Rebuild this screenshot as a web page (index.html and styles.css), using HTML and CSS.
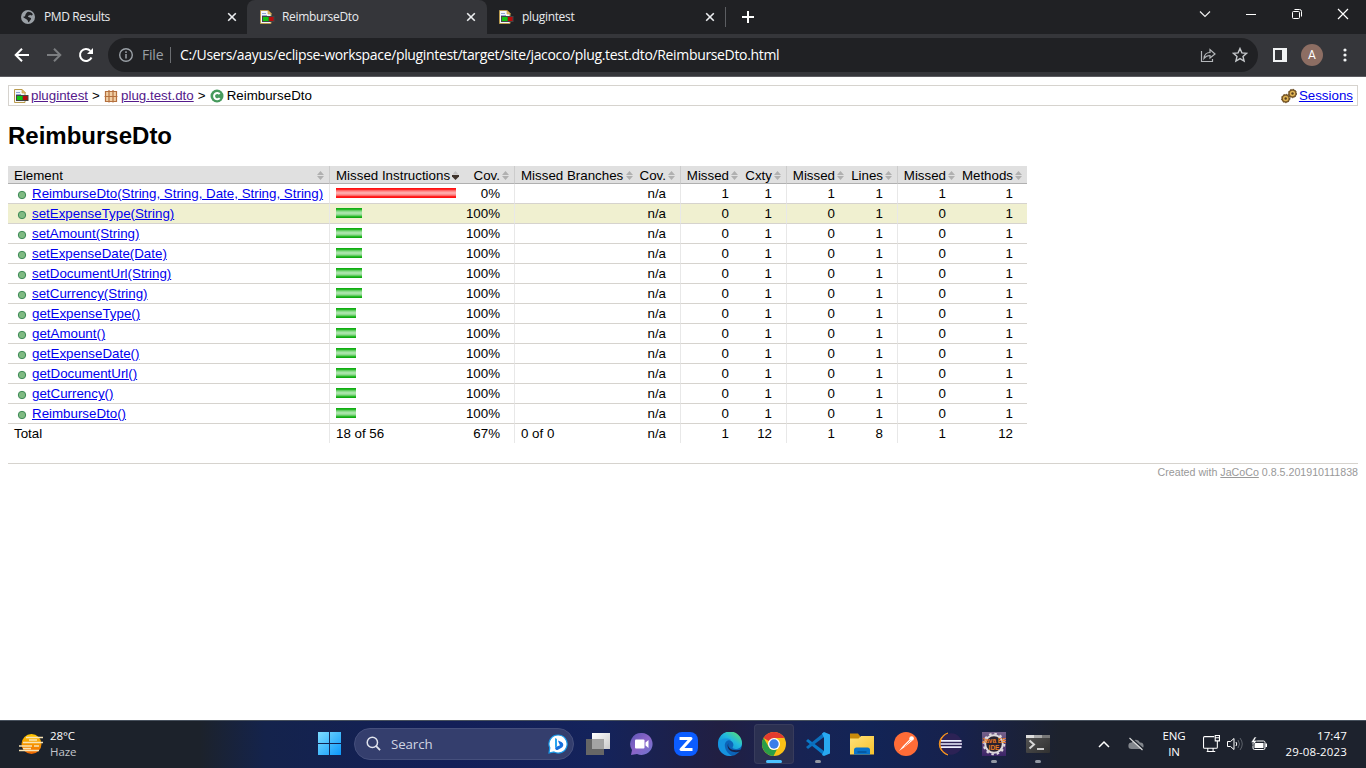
FILE: index.html
```html
<!DOCTYPE html>
<html lang="en">
<head>
<meta charset="utf-8">
<title>ReimburseDto</title>
<link rel="stylesheet" href="styles.css">
</head>
<body>
<svg class="defs" aria-hidden="true">
  <defs>
    <linearGradient id="gwin" x1="0" y1="0" x2="1" y2="1"><stop offset="0" stop-color="#7ddcff"/><stop offset="1" stop-color="#0c98fb"/></linearGradient>
    <linearGradient id="gsun" x1="0" y1="0" x2="0" y2="1"><stop offset="0" stop-color="#ffc900"/><stop offset="1" stop-color="#ee6500"/></linearGradient>
    <linearGradient id="gchat" x1="0" y1="0" x2="1" y2="1"><stop offset="0" stop-color="#5a55b5"/><stop offset=".5" stop-color="#8b64c8"/><stop offset="1" stop-color="#6b76d0"/></linearGradient>
    <linearGradient id="gedge" x1="0" y1="1" x2="1" y2="0"><stop offset="0" stop-color="#087bd5"/><stop offset=".55" stop-color="#22b9df"/><stop offset="1" stop-color="#66e85a"/></linearGradient>
    <linearGradient id="gfold" x1="0" y1="0" x2="1" y2="1"><stop offset="0" stop-color="#ffe27a"/><stop offset="1" stop-color="#f7c22c"/></linearGradient>
    <linearGradient id="gview" x1="0" y1="0" x2="1" y2="1"><stop offset="0" stop-color="#fff"/><stop offset="1" stop-color="#c9c9c9"/></linearGradient>
    <linearGradient id="gterm" x1="0" y1="0" x2="1" y2="1"><stop offset="0" stop-color="#555"/><stop offset="1" stop-color="#303030"/></linearGradient>
    <linearGradient id="gee" x1="0" y1="0" x2="0" y2="1"><stop offset="0" stop-color="#75618a"/><stop offset="1" stop-color="#3c2467"/></linearGradient>
  </defs>
  <symbol id="report" viewBox="0 0 16 16">
    <path d="M1.500 1.500h7.500l3 3v10H1.500z" fill="#f4f6fb" stroke="#b99a4c"/>
    <path d="M9 1.500V5h3.500z" fill="#e4c070" stroke="#c79a3c" stroke-width=".6"/>
    <path d="M3 4.500h4M3 6.500h5" stroke="#8ea5d2"/>
    <path d="M3 7h12.500v6H3z" fill="#444"/>
    <path d="M4 8h5.500v4H4z" fill="#12c312"/><path d="M10 8h4.500v4H10z" fill="#b90b0b"/>
  </symbol>
  <symbol id="close" viewBox="0 0 10 10"><path d="M1.200 1.200l7.600 7.600M8.800 1.200L1.200 8.800" stroke="#eceef0" stroke-width="1.600"/></symbol>
  <symbol id="sort" viewBox="0 0 7 9"><path d="M3.500 0L7 4H0zM0 5h7L3.500 9z" fill="#b0b0b0"/></symbol>
  <symbol id="dot" viewBox="0 0 10 10"><circle cx="5" cy="5" r="3.700" fill="#7fba82" stroke="#3f8a58"/></symbol>
</svg>

<div class="tabs">
  <div class="tab first">
    <svg class="fav" viewBox="0 0 16 16"><circle cx="8" cy="8" r="7" fill="#9aa0a6"/><path d="M7.500 3c2-.5 4.500.5 5.300 2.500-.8 1.300-2 1-2.600.2-.6 1.200-1.800.6-2.200 1.600-.3 1 1.800.8 2.800 1.600 1 1-.8 2-1.800 4.300-1.200.2-.8-1.500-1.600-2.300C6.400 9.700 4 9.500 2.800 7.500c.9.300 2 .3 2.300-.5C5.400 6 5.800 4 7.500 3z" fill="#202124"/></svg>
    <span class="tabname">PMD Results</span><svg class="x"><use href="#close"/></svg>
  </div>
  <div class="tab active">
    <svg class="fav"><use href="#report"/></svg>
    <span class="tabname">ReimburseDto</span><svg class="x"><use href="#close"/></svg>
  </div>
  <div class="tab third">
    <svg class="fav"><use href="#report"/></svg>
    <span class="tabname">plugintest</span><svg class="x"><use href="#close"/></svg>
  </div>
  <i class="tabsep"></i>
  <svg class="newtab" viewBox="0 0 12 12"><path d="M6 0v12M0 6h12" stroke="#fff" stroke-width="2"/></svg>
  <div class="winctl">
    <svg viewBox="0 0 12 12"><path d="M1 3.500l5 5 5-5" fill="none" stroke="#eee" stroke-width="1.200"/></svg>
    <svg viewBox="0 0 12 12"><path d="M1 6.500h10" stroke="#fff"/></svg>
    <svg viewBox="0 0 12 12" fill="none" stroke="#fff"><rect x="1.500" y="3.500" width="7" height="7" rx="1"/><path d="M3.500 1.500h5q2 0 2 2v5"/></svg>
    <svg viewBox="0 0 12 12"><path d="M1 1l10 10M11 1L1 11" stroke="#fff" stroke-width="1.200"/></svg>
  </div>
</div>

<div class="toolbar">
  <svg class="nav" viewBox="0 0 16 16"><path d="M15 8H2M8 1.700L1.700 8 8 14.300" fill="none" stroke="#fff" stroke-width="2"/></svg>
  <svg class="nav" viewBox="0 0 16 16"><path d="M1 8h13M8 1.700L14.300 8 8 14.300" fill="none" stroke="#7c7e81" stroke-width="2"/></svg>
  <svg class="nav" viewBox="0 0 16 16"><path d="M13.500 10.500A6 6 0 1 1 12.400 3.900" fill="none" stroke="#fff" stroke-width="2"/><path d="M15 1v6H9z" fill="#fff"/></svg>
  <div class="omnibox">
    <svg class="info" viewBox="0 0 16 16"><circle cx="8" cy="8" r="6.300" fill="none" stroke="#9aa0a6" stroke-width="1.400"/><path d="M8 7v4.500M8 4.300v1.600" stroke="#9aa0a6" stroke-width="1.500"/></svg>
    <span class="scheme">File</span>
    <span class="url">C:/Users/aayus/eclipse-workspace/plugintest/target/site/jacoco/plug.test.dto/ReimburseDto.html</span>
    <svg class="obi" viewBox="0 0 16 16" fill="none" stroke="#b4b7ba" stroke-width="1.200"><path d="M1.500 4v10.500h11V12M4 11.500c.3-4 2.500-6 6-6V2.500L15 7l-5 4V8.500c-2.500 0-4.500 1-6 3z"/></svg>
    <svg class="obi star" viewBox="0 0 16 16"><path d="M8 1.500l1.900 4.400 4.700.4-3.600 3.100 1.100 4.700L8 11.600l-4.100 2.500L5 9.400 1.400 6.300l4.700-.4z" fill="none" stroke="#c5c8cb" stroke-width="1.400"/></svg>
  </div>
  <svg class="side" viewBox="0 0 14 14"><path d="M0 0h14v14H0zM2 2v10h7V2z" fill="#f1f3f4" fill-rule="evenodd"/></svg>
  <span class="avatar">A</span>
  <svg class="more" viewBox="0 0 4 14"><g fill="#f1f3f4"><circle cx="2" cy="2" r="1.600"/><circle cx="2" cy="7" r="1.600"/><circle cx="2" cy="12" r="1.600"/></g></svg>
</div>

<main class="page">
  <div class="breadcrumb">
    <svg class="bi"><use href="#report"/></svg><a class="visited" href="#">plugintest</a><span class="gt">&gt;</span>
    <svg class="bi" viewBox="0 0 16 16"><rect x="3" y="3" width="10" height="10" fill="#f1cfa4"/><path d="M2.500 3.500h11v10h-11zM6 2v12.500M10 2v12.500M1.500 8.500h13" fill="none" stroke="#b5703e" stroke-width="1.200"/></svg><a class="visited" href="#">plug.test.dto</a><span class="gt">&gt;</span>
    <svg class="bi" viewBox="0 0 16 16"><circle cx="8" cy="8" r="6.500" fill="#479a5c"/><path d="M10.700 6A3.200 3.200 0 1 0 10.700 10.200" fill="none" stroke="#fff" stroke-width="2"/></svg><span>ReimburseDto</span>
    <svg class="bi sess" viewBox="0 0 16 16"><g fill="#e0b455" stroke="#7d5a26"><circle cx="4.700" cy="10.500" r="3.500" stroke-width="1.500"/><circle cx="11.500" cy="5.500" r="3.500" stroke-width="1.500"/></g><g fill="none" stroke="#5c421f" stroke-dasharray="1.300 1.500"><circle cx="4.700" cy="10.500" r="4.200"/><circle cx="11.500" cy="5.500" r="4.200"/></g><circle cx="4.700" cy="10.500" r="1.200" fill="#5c421f"/><circle cx="11.500" cy="5.500" r="1.200" fill="#5c421f"/></svg><a href="#">Sessions</a>
  </div>
  <h1>ReimburseDto</h1>
  <table class="coverage">
    <colgroup><col class="w321"><col class="w135"><col class="w50"><col class="w124"><col class="w42"><col class="w63"><col class="w43"><col class="w63"><col class="w48"><col class="w63"><col class="w67"></colgroup>
    <thead><tr>
      <td>Element<svg class="so"><use href="#sort"/></svg></td>
      <td class="b">Missed Instructions<svg class="so" viewBox="0 0 7 9"><path d="M3.500 0l3 3.500h-6z" fill="#c4c4c4"/><path d="M0 4h7v1.500L3.500 9 0 5.500z" fill="#40352c"/></svg></td>
      <td class="r">Cov.<svg class="so"><use href="#sort"/></svg></td>
      <td class="b">Missed Branches<svg class="so"><use href="#sort"/></svg></td>
      <td class="r">Cov.<svg class="so"><use href="#sort"/></svg></td>
      <td class="b r">Missed<svg class="so"><use href="#sort"/></svg></td>
      <td class="r">Cxty<svg class="so"><use href="#sort"/></svg></td>
      <td class="b r">Missed<svg class="so"><use href="#sort"/></svg></td>
      <td class="r">Lines<svg class="so"><use href="#sort"/></svg></td>
      <td class="b r">Missed<svg class="so"><use href="#sort"/></svg></td>
      <td class="r">Methods<svg class="so"><use href="#sort"/></svg></td>
    </tr></thead>
    <tbody>
      <tr><td class="el"><svg class="dot"><use href="#dot"/></svg><a href="#">ReimburseDto(String, String, Date, String, String)</a></td><td class="b"><i class="bar red" style="width:120px"></i></td><td class="r">0%</td><td class="b"></td><td class="r">n/a</td><td class="b r">1</td><td class="r">1</td><td class="b r">1</td><td class="r">1</td><td class="b r">1</td><td class="r">1</td></tr>
      <tr class="hover"><td class="el"><svg class="dot"><use href="#dot"/></svg><a href="#">setExpenseType(String)</a></td><td class="b"><i class="bar" style="width:26px"></i></td><td class="r">100%</td><td class="b"></td><td class="r">n/a</td><td class="b r">0</td><td class="r">1</td><td class="b r">0</td><td class="r">1</td><td class="b r">0</td><td class="r">1</td></tr>
      <tr><td class="el"><svg class="dot"><use href="#dot"/></svg><a href="#">setAmount(String)</a></td><td class="b"><i class="bar" style="width:26px"></i></td><td class="r">100%</td><td class="b"></td><td class="r">n/a</td><td class="b r">0</td><td class="r">1</td><td class="b r">0</td><td class="r">1</td><td class="b r">0</td><td class="r">1</td></tr>
      <tr><td class="el"><svg class="dot"><use href="#dot"/></svg><a href="#">setExpenseDate(Date)</a></td><td class="b"><i class="bar" style="width:26px"></i></td><td class="r">100%</td><td class="b"></td><td class="r">n/a</td><td class="b r">0</td><td class="r">1</td><td class="b r">0</td><td class="r">1</td><td class="b r">0</td><td class="r">1</td></tr>
      <tr><td class="el"><svg class="dot"><use href="#dot"/></svg><a href="#">setDocumentUrl(String)</a></td><td class="b"><i class="bar" style="width:26px"></i></td><td class="r">100%</td><td class="b"></td><td class="r">n/a</td><td class="b r">0</td><td class="r">1</td><td class="b r">0</td><td class="r">1</td><td class="b r">0</td><td class="r">1</td></tr>
      <tr><td class="el"><svg class="dot"><use href="#dot"/></svg><a href="#">setCurrency(String)</a></td><td class="b"><i class="bar" style="width:26px"></i></td><td class="r">100%</td><td class="b"></td><td class="r">n/a</td><td class="b r">0</td><td class="r">1</td><td class="b r">0</td><td class="r">1</td><td class="b r">0</td><td class="r">1</td></tr>
      <tr><td class="el"><svg class="dot"><use href="#dot"/></svg><a href="#">getExpenseType()</a></td><td class="b"><i class="bar" style="width:20px"></i></td><td class="r">100%</td><td class="b"></td><td class="r">n/a</td><td class="b r">0</td><td class="r">1</td><td class="b r">0</td><td class="r">1</td><td class="b r">0</td><td class="r">1</td></tr>
      <tr><td class="el"><svg class="dot"><use href="#dot"/></svg><a href="#">getAmount()</a></td><td class="b"><i class="bar" style="width:20px"></i></td><td class="r">100%</td><td class="b"></td><td class="r">n/a</td><td class="b r">0</td><td class="r">1</td><td class="b r">0</td><td class="r">1</td><td class="b r">0</td><td class="r">1</td></tr>
      <tr><td class="el"><svg class="dot"><use href="#dot"/></svg><a href="#">getExpenseDate()</a></td><td class="b"><i class="bar" style="width:20px"></i></td><td class="r">100%</td><td class="b"></td><td class="r">n/a</td><td class="b r">0</td><td class="r">1</td><td class="b r">0</td><td class="r">1</td><td class="b r">0</td><td class="r">1</td></tr>
      <tr><td class="el"><svg class="dot"><use href="#dot"/></svg><a href="#">getDocumentUrl()</a></td><td class="b"><i class="bar" style="width:20px"></i></td><td class="r">100%</td><td class="b"></td><td class="r">n/a</td><td class="b r">0</td><td class="r">1</td><td class="b r">0</td><td class="r">1</td><td class="b r">0</td><td class="r">1</td></tr>
      <tr><td class="el"><svg class="dot"><use href="#dot"/></svg><a href="#">getCurrency()</a></td><td class="b"><i class="bar" style="width:20px"></i></td><td class="r">100%</td><td class="b"></td><td class="r">n/a</td><td class="b r">0</td><td class="r">1</td><td class="b r">0</td><td class="r">1</td><td class="b r">0</td><td class="r">1</td></tr>
      <tr><td class="el"><svg class="dot"><use href="#dot"/></svg><a href="#">ReimburseDto()</a></td><td class="b"><i class="bar" style="width:20px"></i></td><td class="r">100%</td><td class="b"></td><td class="r">n/a</td><td class="b r">0</td><td class="r">1</td><td class="b r">0</td><td class="r">1</td><td class="b r">0</td><td class="r">1</td></tr>
    </tbody>
    <tfoot><tr><td>Total</td><td class="b">18 of 56</td><td class="r">67%</td><td class="b">0 of 0</td><td class="r">n/a</td><td class="b r">1</td><td class="r">12</td><td class="b r">1</td><td class="r">8</td><td class="b r">1</td><td class="r">12</td></tr></tfoot>
  </table>
  <footer><span>Created with <a href="#">JaCoCo</a> 0.8.5.201910111838</span></footer>
</main>

<div class="taskbar">
  <svg class="haze" viewBox="0 0 24 24"><circle cx="12.500" cy="12" r="10" fill="url(#gsun)"/><path d="M7 5.500h17M4 10.500h20M10 8h8M0 14h13M15 14h5M4 16.500h8M0 18.500h20" stroke="#f8e3b4" stroke-width="1.700"/></svg>
  <div class="weather"><span>28°C</span><span class="dim">Haze</span></div>
  <svg class="start" viewBox="0 0 24 24"><path d="M0 0h11.500v11.500H0zM12.500 0H24v11.500H12.500zM0 12.500h11.500V24H0zM12.500 12.500H24V24H12.500z" fill="url(#gwin)"/></svg>
  <div class="search">
    <svg class="mag" viewBox="0 0 16 16"><circle cx="6.800" cy="6.800" r="5.500" fill="none" stroke="#e1e4ee" stroke-width="1.600"/><path d="M10.600 10.600l4.400 4.400" stroke="#e1e4ee" stroke-width="1.900"/></svg>
    <span>Search</span>
    <svg class="bing" viewBox="0 0 20 20"><path d="M10 1a9 9 0 1 1-4 17l-5 1 .8-5.200A9 9 0 0 1 10 1z" fill="#fff" stroke="#1697e8" stroke-width="1.200"/><path d="M7 4l2 1v7.500L7 14z" fill="#28a4ef"/><path d="M7 14l2-1.500 3-1.200-1.200-2.600-.8-2.200 3.500 1.500c2.500 1.500 2.300 4.500 0 5.800L10 15.800q-1.300.6-2.300-.4z" fill="#176fdd"/></svg>
  </div>
  <div class="apps">
    <div class="app"><svg viewBox="0 0 24 24"><path d="M6 1h18v16H6z" fill="url(#gview)"/><path d="M0 7h18v16H0z" fill="#666"/><path d="M6 7h12v10H6z" fill="#a3a3a3"/></svg></div>
    <div class="app"><svg viewBox="0 0 24 24"><path d="M12 1a11 11 0 1 1-5 21l-6 1 1-5A11 11 0 0 1 12 1z" fill="url(#gchat)"/><rect x="5" y="7.500" width="9.500" height="9" rx="1" fill="#fff"/><path d="M15.500 10.500l3-2.500v8l-3-2.500z" fill="#fff"/></svg></div>
    <div class="app"><svg viewBox="0 0 24 24"><rect width="24" height="24" rx="8" fill="#0b5cff"/><path d="M5.500 6.500h11.500L7 17.500h11.500" fill="none" stroke="#fff" stroke-width="3" stroke-linejoin="round"/></svg></div>
    <div class="app"><svg viewBox="0 0 24 24"><circle cx="12" cy="12" r="12" fill="#0c64b8"/><path d="M0 12A12 12 0 0 1 24 11c.2 4-3 6-6.500 6-2.700 0-3.500-1-2.500-2.500C17 10 11 6 5.500 8.500 2 10 .5 12 0 12z" fill="url(#gedge)"/><path d="M0 12c1-5 9-7 13-4-4-.5-7 2.500-6 7 .7 4 4 7.500 7 8.700C6 25 0 19 0 12z" fill="#1694df"/><path d="M10.500 11c-2 5 4 9 13 6.500l-1.500 2c-3 .8-5 .8-7 .3-5-1.300-6.500-6-4.500-8.800z" fill="#17224b"/></svg></div>
    <div class="app current"><svg viewBox="0 0 24 24"><circle cx="12" cy="12" r="12" fill="#fbc116"/><path d="M12 12L1.600 6A12 12 0 0 1 22.400 6H12z" fill="#e33b2e"/><path d="M6.800 15A6 6 0 0 0 12 18l3-.8L11.500 24A12 12 0 0 1 1.600 6z" fill="#2a9e47"/><circle cx="12" cy="12" r="6" fill="#fff"/><circle cx="12" cy="12" r="4.700" fill="#397eea"/></svg><i class="mark wide"></i></div>
    <div class="app"><svg viewBox="0 0 24 24"><path d="M0 9l2-2 16 12v4.500z" fill="#0879ca"/><path d="M0 15l2 2L18 5V.5z" fill="#0b6fbd"/><path d="M18 0l6 2.500v19L18 24l-2-1 2-4.500V6l-2-4.500z" fill="#28a9f1"/></svg><i class="mark"></i></div>
    <div class="app"><svg viewBox="0 0 24 24"><path d="M0 1.500h8l2 2.500v4H0z" fill="#c88a0b"/><path d="M0 6.500h8.500L11 4h13v18.500H0z" fill="url(#gfold)"/><path d="M4 22.500V18q0-2.500 2.500-2.500h11Q20 15.500 20 18v4.500z" fill="#0873ca"/><path d="M7.500 20h9" stroke="#034a8d" stroke-width="1.200"/></svg></div>
    <div class="app"><svg viewBox="0 0 24 24"><circle cx="12" cy="12" r="12" fill="#ff6c37"/><path d="M5 19l4-5 7-7 2 2-8 6.500z" fill="#fff"/><circle cx="17.600" cy="6.500" r="2.300" fill="#fff"/><path d="M10.500 14.500l6-6" stroke="#ff6c37" stroke-width=".7"/></svg></div>
    <div class="app"><svg viewBox="0 0 24 24"><path d="M10 1A11.300 11.300 0 0 0 10 23 13 13 0 0 1 10 1z" fill="#f7941e" stroke="#f7941e"/><circle cx="13.300" cy="12" r="10.700" fill="#2c2255"/><path d="M3 8.800h20.500M2.600 12h21.400M3 15.200h20.500" stroke="#edf0ff" stroke-width="1.700"/></svg></div>
    <div class="app"><svg viewBox="0 0 24 24"><path d="M0 0h24v24H0z" fill="url(#gee)"/><circle cx="12" cy="12" r="8.800" fill="#2a2230" stroke="#ddd8dc" stroke-width="2"/><circle cx="12" cy="12" r="10.300" fill="none" stroke="#ddd8dc" stroke-width="2" stroke-dasharray="2.500 2.900"/><text class="ee" x="12" y="10.500" text-anchor="middle">Java EE</text><text class="ee" x="12" y="17.500" text-anchor="middle">IDE</text></svg><i class="mark"></i></div>
    <div class="app"><svg viewBox="0 0 24 24"><rect y="3" width="24" height="18" rx="1" fill="url(#gterm)"/><path d="M0 3h8v3H0z" fill="#ddd"/><path d="M8 3h8v3H8z" fill="#aaa"/><path d="M16 3h8v3h-8z" fill="#777"/><path d="M3.500 8.500l4.500 4-4.500 4" fill="none" stroke="#d8d8d8" stroke-width="2"/><path d="M11 17h7" stroke="#fff" stroke-width="1.500"/></svg><i class="mark"></i></div>
  </div>
  <svg class="chev" viewBox="0 0 12 8"><path d="M1 7l5-5 5 5" fill="none" stroke="#fff" stroke-width="1.500"/></svg>
  <svg class="cloud" viewBox="0 0 16 14"><path d="M3.500 12a3.200 3.200 0 0 1 .2-6.400A4.500 4.500 0 0 1 12 5.400a3.300 3.300 0 0 1 .5 6.600z" fill="#82868c"/><path d="M2.500 .5l13 11.500" stroke="#1d232d" stroke-width="1.500"/><path d="M1.500 1l13 12" stroke="#ddd" stroke-width="1.100"/></svg>
  <div class="lang"><span>ENG</span><span>IN</span></div>
  <svg class="net" viewBox="0 0 16 16" fill="none" stroke="#fff"><path d="M10.500 1.500H1.500q-1 0-1 1v9q0 1 1 1h11q1 0 1-1V8M4.500 12.500v3m5-3v3M3.500 15.500h8M11.500.500h4v5h-4zM13.500 5.500V8M11.500 2.500h4"/></svg>
  <svg class="vol" viewBox="0 0 16 14" fill="none" stroke="#fff"><path d="M.500 4.500h3L7 1.500v11L3.500 9.500h-3z"/><path d="M9 5q1.500 2 0 4"/><path d="M11 3q3 4 0 8M13 1q4.500 6 0 12" stroke="#5d626b"/></svg>
  <svg class="bat" viewBox="0 0 16 14"><rect x="2" y="4" width="12" height="8.500" rx="1.500" fill="none" stroke="#fff"/><path d="M3.500 6h9v5h-9zM14.500 6.500H16V10h-1.500z" fill="#fff"/><path d="M3.500 0L0 5.500h2.500L1.500 9 6 3.500H3.500L5.500 0z" fill="#fff" stroke="#1d232d" stroke-width=".5"/></svg>
  <div class="clock"><span>17:47</span><span>29-08-2023</span></div>
</div>
</body>
</html>
```
FILE: styles.css
```css
* { box-sizing: border-box; }
body { margin: 0; width: 1366px; height: 768px; overflow: hidden; display: flex; flex-direction: column; background: #fff; font-family: "Liberation Sans", Arial, sans-serif; font-size: 13.333px; color: #000; }
svg { display: block; flex: none; }
.defs { position: absolute; width: 0; height: 0; }

.tabs { height: 34px; background: #202124; display: flex; align-items: center; font-family: "Open Sans", sans-serif; font-size: 12px; color: #e8eaed; flex: none; }
.tab { height: 34px; display: flex; align-items: center; padding: 0 11px 0 12px; width: 240px; flex: none; }
.first { width: 247px; padding-left: 20px; padding-right: 10px; }
.third { width: 238px; padding: 0 10px 0 11px; }
.active { background: #35363a; border-radius: 8px 8px 0 0; }
.fav { width: 16px; height: 16px; margin-right: 8px; }
.active .fav { margin-right: 7px; }
.tabname { flex: 1; letter-spacing: -.33px; padding-bottom: 1px; }
.first .tabname { letter-spacing: -.38px; }
.x { width: 10px; height: 10px; }
.tabsep { width: 1px; height: 20px; background: #5c5e62; }
.newtab { width: 12px; height: 12px; margin-left: 16px; }
.winctl { margin-left: auto; display: flex; gap: 34px; padding-right: 17px; margin-top: -6px; }
.winctl svg { width: 12px; height: 12px; }

.toolbar { height: 43px; flex: none; background: #35363a; border-bottom: 1px solid #5b5b60; display: flex; align-items: center; padding: 0 19px 0 14px; font-family: "Open Sans", sans-serif; }
.nav { width: 16px; height: 16px; margin-right: 16px; }
.omnibox { width: 1150px; height: 34px; border-radius: 17px; background: #202124; display: flex; align-items: center; padding: 0 10px; margin-left: -2px; }
.info { width: 16px; height: 16px; margin-right: 8px; }
.scheme { color: #9aa0a6; font-size: 14px; width: 29px; border-right: 1px solid #6b6e72; line-height: 16px; padding-right: 7px; margin-right: 9px; letter-spacing: -.2px; }
.url { color: #fff; font-size: 14px; letter-spacing: -.34px; white-space: nowrap; flex: 1; padding-bottom: 1px; }
.obi { width: 16px; height: 16px; }
.star { margin-left: 16px; }
.side { width: 14px; height: 14px; margin-left: 15px; }
.avatar { width: 22px; height: 22px; border-radius: 11px; background: #8d6e63; color: #fff; font: 12px/22px Roboto, sans-serif; text-align: center; margin-left: 14px; }
.more { width: 4px; height: 14px; margin-left: auto; }

.page { flex: 1; padding: 8px 8px 0; }
a { color: #00e; text-decoration: underline; }
.visited { color: #551a8b; }
.breadcrumb { height: 21px; border: 1px solid #d6d3ce; display: flex; align-items: center; padding: 0 4px; white-space: nowrap; }
.bi { width: 16px; height: 16px; margin-right: 2px; }
.gt { width: 8px; margin: 0 3px 0 4px; }
.sess { margin-left: auto; }
h1 { font-size: 24px; line-height: 28px; margin: 16px 0 16px; }
.coverage { border-collapse: separate; border-spacing: 0; table-layout: fixed; width: 1019px; line-height: 15px; }
.w321 { width: 321px; } .w135 { width: 135px; } .w50 { width: 50px; } .w124 { width: 124px; } .w42 { width: 42px; }
.w63 { width: 63px; } .w43 { width: 43px; } .w48 { width: 48px; } .w67 { width: 67px; }
td { padding: 2px 0 0 6px; white-space: nowrap; vertical-align: top; overflow: visible; }
td.r { padding: 2px 14px 0 0; text-align: right; }
td.b { border-left: 1px solid #e8e8e8; }
thead td { background: #e0e0e0; border-bottom: 1px solid #b0b0b0; height: 18px; position: relative; }
thead td.b { border-left-color: #ccc; }
.so { position: absolute; right: 5px; top: 5px; width: 7px; height: 9px; }
tbody td { height: 20px; border-bottom: 1px solid #d6d3ce; }
tfoot td { height: 19px; }
.hover { background: #f0f0d0; }
.el a { margin-left: 1px; }
.dot { width: 10px; height: 10px; display: inline-block; margin: 0 4px -2px 3px; vertical-align: baseline; }
.bar { display: block; height: 10px; margin-top: 2px; background: linear-gradient(#12ae12 0 1px, #27b827 1px 2px, #63cc63 2px 3px, #8cdb8c 3px 4px, #a8e4a8 4px 6px, #90dc90 6px 7px, #64cd64 7px 8px, #28b928 8px 9px, #10a810 9px); }
.red { background: linear-gradient(#f11 0 1px, #ff2626 1px 2px, #f66 2px 3px, #ff8c8c 3px 4px, #ffa8a8 4px 6px, #ff8c8c 6px 7px, #f66 7px 8px, #ff2020 8px 9px, #f11 9px); }
footer { margin-top: 20px; border-top: 1px solid #d6d3ce; color: #999; font-size: 10.667px; line-height: 13px; padding-top: 2px; text-align: right; }
footer a { color: #999; }

.taskbar { height: 48px; flex: none; border-top: 1px solid #47515d; display: flex; align-items: center; padding: 0 19px 2px; color: #fff; font-family: "Open Sans", sans-serif; font-size: 11.500px; line-height: 16px; background: linear-gradient(90deg, #1c222b 0 200px, #14234c 265px, #131f58 450px, #14235b 600px, #211f42 720px, #182353 800px, #122456 870px, #17214c 960px, #1d222d 1060px); }
.haze { width: 24px; height: 24px; margin-right: 7px; }
.weather { display: flex; flex-direction: column; width: 268px; letter-spacing: -.1px; }
.dim { color: #c3c6cb; }
.start { width: 23px; height: 23px; margin-right: 13px; }
.search { width: 220px; height: 32px; border-radius: 16px; background: #343e6d; border: 1px solid #454f7c; display: flex; align-items: center; padding: 0 5px 0 11px; font-size: 13.300px; color: #d0d4e2; letter-spacing: -.1px; }
.mag { width: 15px; height: 15px; margin-right: 10px; }
.bing { width: 20px; height: 20px; margin-left: auto; }
.apps { display: flex; margin-left: 4px; gap: 4px; }
.app { width: 40px; height: 40px; display: flex; align-items: center; justify-content: center; position: relative; border-radius: 4px; }
.app svg { width: 24px; height: 24px; }
.current { background: #2b3051; box-shadow: inset 0 0 0 1px #383c5c; }
.mark { position: absolute; bottom: 1px; left: 17px; width: 6px; height: 3px; border-radius: 2px; background: #9298a3; }
.wide { left: 12px; width: 16px; background: #4cc2ff; }
.ee { font: bold 6.500px "Liberation Sans", sans-serif; fill: #e77a22; }
.chev { width: 12px; height: 8px; margin-left: 40px; margin-right: 18px; }
.cloud { width: 16px; height: 14px; margin-right: 17px; }
.lang { display: flex; flex-direction: column; align-items: center; width: 26px; margin-right: 16px; font-size: 11.500px; letter-spacing: -.1px; }
.net { width: 17px; height: 17px; margin-right: 7px; }
.vol { width: 16px; height: 14px; margin-right: 8px; }
.bat { width: 16px; height: 14px; }
.clock { margin-left: auto; display: flex; flex-direction: column; text-align: right; letter-spacing: .15px; }
```
